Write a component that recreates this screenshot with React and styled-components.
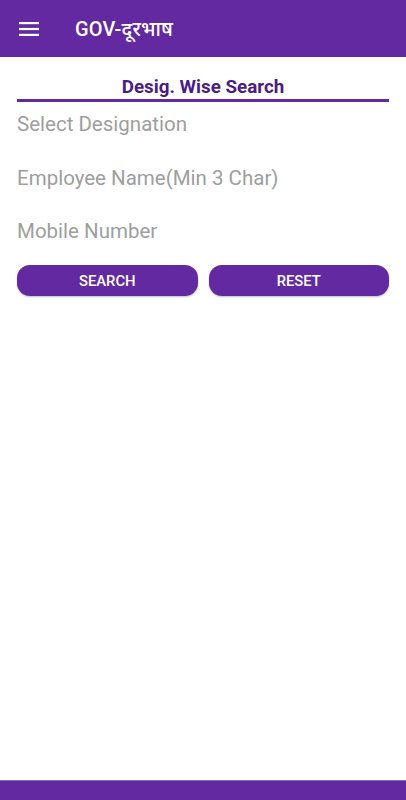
import styled, { createGlobalStyle } from "styled-components";

const Global = createGlobalStyle`
  html, body, #root { margin: 0; padding: 0; height: 100%; }
  body {
    background: #ffffff;
    font-family: Roboto, "Noto Sans", "Liberation Sans", sans-serif;
  }
`;

const Screen = styled.div`
  display: flex;
  flex-direction: column;
  height: 800px;
  width: 406px;
  overflow: hidden;
`;

const TopBar = styled.header`
  height: 57px;
  background: #6329a0;
  display: flex;
  align-items: center;
  padding-left: 19px;
  gap: 36px;
  box-sizing: border-box;
  color: #fff;
`;

const Title = styled.h1`
  margin: 0;
  font-size: 20px;
  font-weight: 500;
  letter-spacing: 0.1px;
  padding-bottom: 1px;
`;

const Content = styled.main`
  flex: 1;
  padding: 0 17px;
  display: flex;
  flex-direction: column;
`;

const TabHeading = styled.div`
  margin-top: 19px;
  text-align: center;
  font-size: 18.8px;
  font-weight: 700;
  color: #4a1c88;
  line-height: 22px;
  padding-bottom: 1px;
  border-bottom: 3px solid #6329a0;
`;

const Field = styled.input`
  border: none;
  outline: none;
  background: transparent;
  padding: 0;
  height: ${(p) => p.h || 54}px;
  font-family: Roboto, "Noto Sans", sans-serif;
  font-size: 20.5px;
  color: #333;
  &::placeholder { color: #9e9e9e; }
`;

const Buttons = styled.div`
  display: grid;
  grid-template-columns: 1fr 1fr;
  gap: 11px;
  margin-top: 13px;
`;

const Button = styled.button`
  height: 31px;
  border: none;
  border-radius: 13px;
  background: #6329a0;
  color: #fff;
  font-family: Roboto, "Noto Sans", sans-serif;
  font-size: 14.8px;
  font-weight: 500;
  box-shadow: 0 1px 2px rgba(0,0,0,0.25);
`;

const BottomBar = styled.footer`
  height: 19px;
  background: #6329a0;
  border-top: 1px solid #8a6ab0;
`;

const Menu = () => (
  <svg width="20" height="14" viewBox="0 0 20 14">
    <rect x="0" y="0" width="20" height="2.2" fill="#fff" />
    <rect x="0" y="5.9" width="20" height="2.2" fill="#fff" />
    <rect x="0" y="11.8" width="20" height="2.2" fill="#fff" />
  </svg>
);

export default function App() {
  return (
    <Screen>
      <Global />
      <TopBar>
        <Menu />
        <Title>GOV-दूरभाष</Title>
      </TopBar>
      <Content>
        <TabHeading>Desig. Wise Search</TabHeading>
        <Field h={44} placeholder="Select Designation" readOnly />
        <Field h={64} placeholder="Employee Name(Min 3 Char)" />
        <Field h={42} placeholder="Mobile Number" />
        <Buttons>
          <Button>SEARCH</Button>
          <Button>RESET</Button>
        </Buttons>
      </Content>
      <BottomBar />
    </Screen>
  );
}
